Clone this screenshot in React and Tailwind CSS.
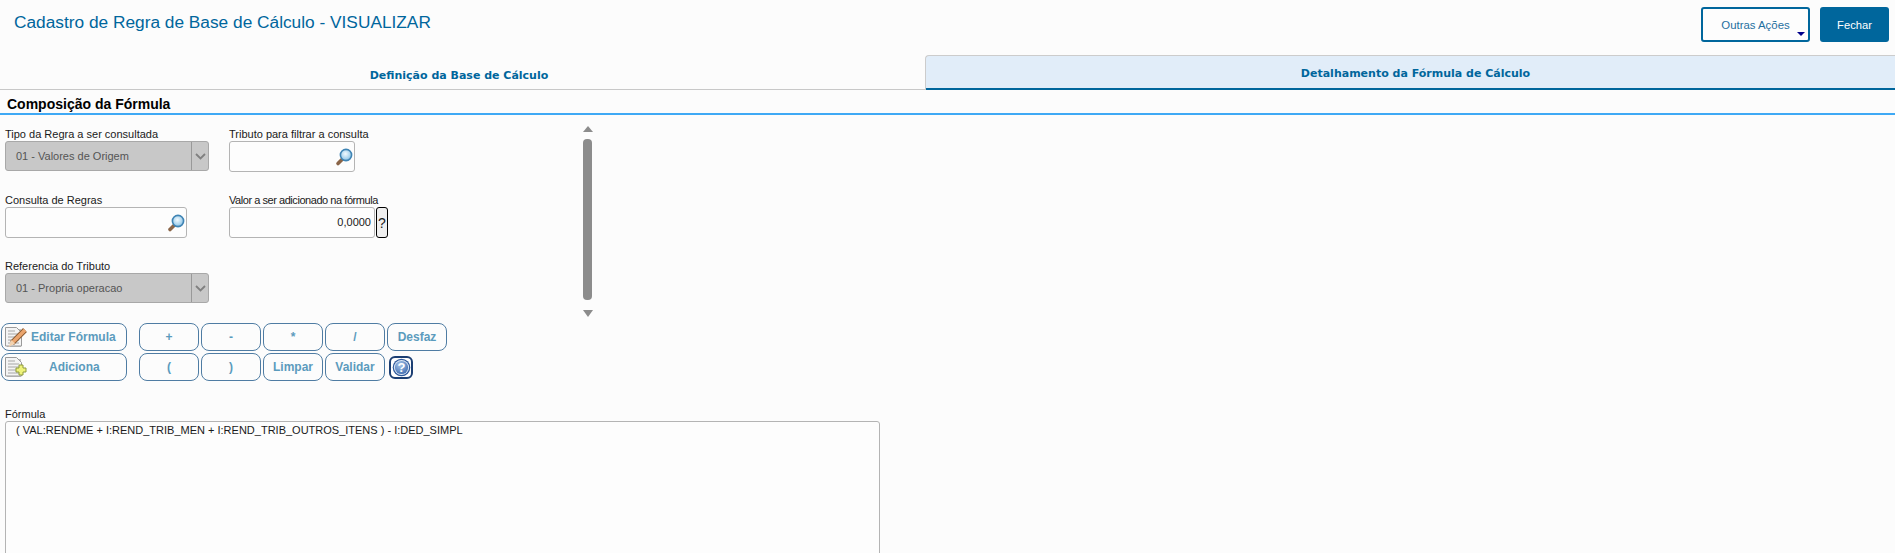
import { Fragment } from 'react'

function Lens() {
  return (
    <svg width="20" height="20" viewBox="0 0 20 20" className="shrink-0">
      <defs>
        <radialGradient id="lens" cx="0.45" cy="0.4" r="0.7">
          <stop offset="0" stopColor="#f2fafe" />
          <stop offset="0.65" stopColor="#a3d0ec" />
          <stop offset="1" stopColor="#4b8cbc" />
        </radialGradient>
      </defs>
      <path d="M9 11.5L4 16.5" stroke="#8a6548" strokeWidth="3.6" strokeLinecap="round" />
      <circle cx="12" cy="8" r="5.6" fill="url(#lens)" stroke="#3f84b4" strokeWidth="1.6" />
    </svg>
  )
}

function Doc({ children }) {
  return (
    <svg width="26" height="26" viewBox="0 0 26 26" className="shrink-0">
      <path d="M3 5h14v18H3z" fill="#c4c4c4" />
      <path d="M1.5 3.5h11l5 5v13.5h-16z" fill="#f4f4f4" stroke="#9a9a9a" />
      <path d="M4 7h7M4 10h11M4 13h11M4 16h11M4 19h11" stroke="#a6a6a6" />
      {children}
    </svg>
  )
}

function SelectBox({ value }) {
  return (
    <div className="flex h-[30px] w-[204px] items-center rounded-[3px] border border-[#a8a8a8] bg-[#c8c8c8] text-[#555555]">
      <span className="flex-1 pl-[10px]">{value}</span>
      <span className="flex h-full w-[17px] items-center justify-center border-l border-[#999999]">
        <svg width="11" height="7" viewBox="0 0 11 7">
          <path d="M1 1l4.5 4.5L10 1" fill="none" stroke="#808080" strokeWidth="1.8" />
        </svg>
      </span>
    </div>
  )
}

function LensInput({ width }) {
  return (
    <div className={`flex h-[31px] items-center justify-end rounded-[3px] border border-[#b4b4b4] bg-[#fdfdfd] ${width}`}>
      <Lens />
    </div>
  )
}

function OpButton({ children, wide }) {
  return (
    <button className={`flex h-[28px] items-center justify-center rounded-[8px] border border-[#4f7ca3] bg-[#fcfcfc] text-[12px] font-bold text-[#5b9bbd] ${wide ? 'w-[126px]' : 'w-[60px]'}`}>
      {children}
    </button>
  )
}

const rowOne = ['+', '-', '*', '/', 'Desfaz']
const rowTwo = ['(', ')', 'Limpar', 'Validar']

export default function App() {
  return (
    <div className="h-[553px] overflow-hidden bg-[#fcfcfc] font-['Liberation_Sans',Arial,sans-serif] text-[11px] text-[#1a1a1a]">
      {/* HEADER */}
      <div className="flex h-[55px] items-start justify-between pr-[6px] pl-[14px]">
        <h1 className="pt-[10px] text-[17.3px] leading-[24px] font-normal text-[#00669c]">
          Cadastro de Regra de Base de Cálculo - VISUALIZAR
        </h1>
        <div className="flex gap-[10px] pt-[7px]">
          <button className="relative h-[35px] w-[109px] rounded-[3px] border-2 border-[#00669c] bg-[#fdfdfd] pt-[3px] text-[11.4px] text-[#1f6f9f]">
            Outras Ações
            <span className="absolute right-[3px] bottom-[4px] h-0 w-0 border-x-[4px] border-t-[4px] border-x-transparent border-t-[#00008b]"></span>
          </button>
          <button className="h-[35px] w-[69px] rounded-[3px] bg-[#00669c] pt-[2px] text-[11.2px] text-white">Fechar</button>
        </div>
      </div>

      {/* TABS */}
      <div className="flex h-[35px]">
        <div className="flex w-[925px] items-center justify-center border-b border-[#c8c8c8] pt-[9px] pr-[7px] font-['DejaVu_Sans',sans-serif] text-[11px] font-bold text-[#00669c]">
          Definição da Base de Cálculo
        </div>
        <div className="flex flex-1 items-center justify-center rounded-tl-[4px] border-t border-l border-[#cccccc] border-b-0 bg-[#e1edf9] pt-[2px] pl-[10px] shadow-[inset_0_-2px_0_#00669c] font-['DejaVu_Sans',sans-serif] text-[11px] font-bold text-[#00669c]">
          Detalhamento da Fórmula de Cálculo
        </div>
      </div>

      {/* SECTION */}
      <div className="h-[25px] border-b-2 border-[#3fa9f5] pt-[5px] pl-[7px] text-[14px] leading-[18px] font-bold text-black">
        Composição da Fórmula
      </div>

      <div className="flex h-[208px] pl-[5px]">
        <div className="grid w-[578px] grid-cols-[224px_1fr] content-start pt-[12px]">
          <div className="h-[66px]">
            <div className="h-[14px] leading-[14px]">Tipo da Regra a ser consultada</div>
            <SelectBox value="01 - Valores de Origem" />
          </div>
          <div>
            <div className="h-[14px] leading-[14px]">Tributo para filtrar a consulta</div>
            <LensInput width="w-[126px]" />
          </div>
          <div className="h-[66px]">
            <div className="h-[14px] leading-[14px]">Consulta de Regras</div>
            <LensInput width="w-[182px]" />
          </div>
          <div>
            <div className="h-[14px] leading-[14px] tracking-[-0.45px]">Valor a ser adicionado na fórmula</div>
            <div className="flex gap-[1px]">
              <div className="flex h-[31px] w-[146px] items-center justify-end rounded-[3px] border border-[#b4b4b4] bg-[#fdfdfd] pr-[3px]">0,0000</div>
              <button className="h-[31px] w-[12px] rounded-[3px] border border-black bg-[#efefef] text-[14px] leading-none">?</button>
            </div>
          </div>
          <div className="h-[66px]">
            <div className="h-[14px] leading-[14px]">Referencia do Tributo</div>
            <SelectBox value="01 - Propria operacao" />
          </div>
        </div>

        {/* SCROLLBAR */}
        <div className="flex w-[9px] flex-col items-center pt-[11px]">
          <span className="h-0 w-0 border-x-[5px] border-b-[6px] border-x-transparent border-b-[#8c8c8c]"></span>
          <span className="mt-[7px] h-[161px] w-[9px] rounded-[4px] bg-[#8c8c8c]"></span>
          <span className="mt-[10px] h-0 w-0 border-x-[5px] border-t-[7px] border-x-transparent border-t-[#8c8c8c]"></span>
        </div>
      </div>

      {/* BUTTONS */}
      <div className="flex flex-col gap-[2px] pl-[1px]">
        <div className="flex">
          <OpButton wide>
            <span className="flex w-full items-center pl-[2px]">
              <Doc>
                <path d="M8 19l13-13" stroke="#8a5a32" strokeWidth="5.4" />
                <path d="M8 19l13-13" stroke="#eba56e" strokeWidth="3.6" />
                <path d="M4.5 23l3-7 3.5 3.5z" fill="#f3d2ae" />
              </Doc>
              <span className="ml-[1px]">Editar Fórmula</span>
            </span>
          </OpButton>
          <div className="ml-[12px] flex gap-[2px]">
            {rowOne.map((item) => (
              <OpButton key={item}>{item}</OpButton>
            ))}
          </div>
        </div>
        <div className="flex">
          <OpButton wide>
            <span className="flex w-full items-center pl-[2px]">
              <Doc>
                <path d="M15 11h4v3h3v4h-3v3h-4v-3h-3v-4h3z" fill="#eef27a" stroke="#8e9a3a" />
              </Doc>
              <span className="ml-[19px]">Adiciona</span>
            </span>
          </OpButton>
          <div className="ml-[12px] flex items-center gap-[2px]">
            {rowTwo.map((item) => (
              <Fragment key={item}>
                <OpButton>{item}</OpButton>
              </Fragment>
            ))}
            <span className="ml-[2px] flex h-[23px] w-[24px] items-center justify-center rounded-[6px] border-2 border-[#1c3f73] bg-[#ffffff]">
              <svg width="19" height="19" viewBox="0 0 19 19">
                <defs>
                  <radialGradient id="help" cx="0.4" cy="0.3" r="0.8">
                    <stop offset="0" stopColor="#a9c6ea" />
                    <stop offset="1" stopColor="#3a68ad" />
                  </radialGradient>
                </defs>
                <circle cx="9.5" cy="9.5" r="8.8" fill="#2f5a9c" />
                <circle cx="9.5" cy="9.5" r="7.6" fill="#dfe9f6" />
                <circle cx="9.5" cy="9.5" r="6.6" fill="url(#help)" />
                <text x="9.5" y="14" textAnchor="middle" fontSize="13" fontWeight="700" fill="#ffffff" fontFamily="Liberation Sans">?</text>
              </svg>
            </span>
          </div>
        </div>
      </div>

      {/* FORMULA */}
      <div className="pt-[26px] pl-[5px]">
        <div className="h-[14px] leading-[15px]">Fórmula</div>
        <div className="h-[200px] w-[875px] rounded-t-[3px] border border-[#b4b4b4] bg-[#fdfdfd] pt-[1px] pl-[10px] leading-[14px]">
          ( VAL:RENDME + I:REND_TRIB_MEN + I:REND_TRIB_OUTROS_ITENS ) - I:DED_SIMPL
        </div>
      </div>
    </div>
  )
}
